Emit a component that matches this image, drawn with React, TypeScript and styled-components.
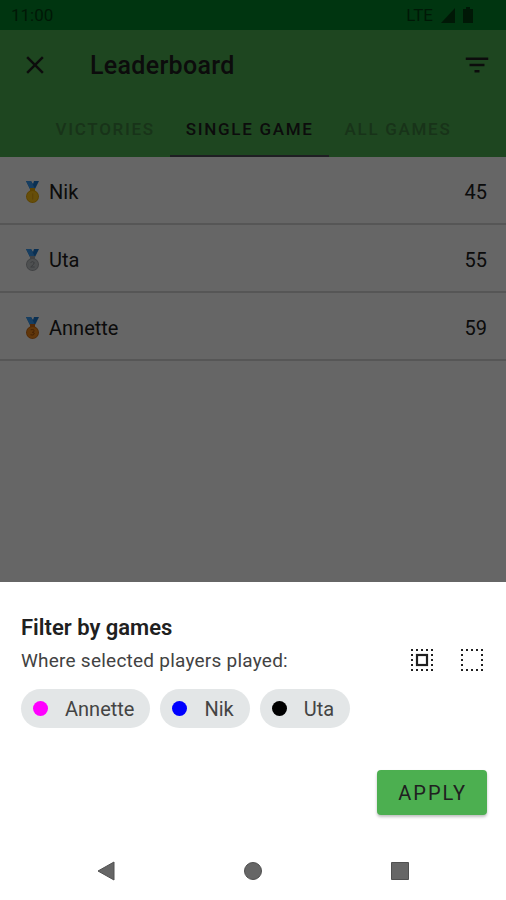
import React from "react";
import styled, { createGlobalStyle } from "styled-components";

const GlobalStyle = createGlobalStyle`
  *, *::before, *::after { box-sizing: border-box; }
  body {
    margin: 0;
    background: #fff;
    font-family: Roboto, "Liberation Sans", sans-serif;
    color: #202020;
  }
  button { font: inherit; color: inherit; border: 0; background: none; padding: 0; cursor: pointer; }
  svg { display: block; }
  h1, h2, p { margin: 0; }
`;

const Screen = styled.div`
  display: grid;
  grid-template: minmax(100vh, auto) / minmax(0, 1fr);
`;

const Page = styled.div`
  grid-area: 1 / 1;
  background: #fff;
`;

const Scrim = styled.div`
  grid-area: 1 / 1;
  z-index: 1;
  display: flex;
  flex-direction: column;
  justify-content: flex-end;
  background: rgba(0, 0, 0, 0.6);
`;

const StatusBar = styled.div`
  display: flex;
  align-items: center;
  height: 30px;
  padding: 0 33px 0 11px;
  background: #008428;
  color: #003e10;
  font-size: 17px;
`;

const StatusIcons = styled.div`
  display: flex;
  align-items: center;
  gap: 8px;
  margin-left: auto;
`;

const Header = styled.header`
  background: #4caf50;
`;

const Toolbar = styled.div`
  display: flex;
  align-items: center;
  height: 70px;
  padding: 0 14px 0 20px;
`;

const IconButton = styled.button`
  display: grid;
  place-items: center;
  width: 30px;
  height: 30px;
`;

const Title = styled.h1`
  flex: 1;
  margin-left: 40px;
  padding-top: 2px;
  font-size: 25px;
  line-height: 32px;
  font-weight: 500;
  letter-spacing: 0.0125em;
`;

const Tabs = styled.div`
  display: flex;
  justify-content: center;
`;

const Tab = styled.button<{ $active?: boolean }>`
  height: 57px;
  padding: 3px 15px 0 16px;
  border-bottom: 2px solid ${(p) => (p.$active ? "#4d4d56" : "transparent")};
  color: ${(p) => (p.$active ? "#202020" : "#3c7f3f")};
  font-size: 17px;
  font-weight: 500;
  letter-spacing: 0.1em;
  white-space: nowrap;
`;

const Ranking = styled.ol`
  list-style: none;
  margin: 0;
  padding: 0;
`;

const Row = styled.li`
  display: flex;
  align-items: center;
  height: 68px;
  padding: 3px 19px 0 24px;
  border-bottom: 2px solid #d6d6d6;
  font-size: 20px;
`;

const PlayerName = styled.span`
  flex: 1;
  margin-left: 9px;
`;

const Sheet = styled.section`
  background: #fff;
`;

const SheetBody = styled.div`
  padding: 32px 19px 0 21px;
`;

const SheetTitle = styled.h2`
  font-size: 22px;
  line-height: 28px;
  font-weight: 600;
`;

const FilterLine = styled.div`
  display: flex;
  align-items: center;
  justify-content: space-between;
  height: 38px;
`;

const FilterText = styled.p`
  font-size: 19px;
  line-height: 28px;
  letter-spacing: 0.0125em;
  color: #424242;
`;

const FilterActions = styled.div`
  display: flex;
  gap: 20px;
`;

const Chips = styled.div`
  display: flex;
  flex-wrap: wrap;
  gap: 10px;
  padding-top: 9px;
`;

const Chip = styled.button`
  display: flex;
  align-items: center;
  gap: 17px;
  height: 39px;
  padding: 0 16px 0 12px;
  border-radius: 20px;
  background: #e3e6e7;
  color: #444;
  font-size: 20px;
`;

const Dot = styled.span<{ $color: string }>`
  width: 15px;
  height: 15px;
  border-radius: 50%;
  background: ${(p) => p.$color};
`;

const Actions = styled.div`
  display: flex;
  justify-content: flex-end;
  padding-top: 42px;
`;

const ApplyButton = styled.button`
  height: 45px;
  padding: 0 20px 0 21px;
  border-radius: 4px;
  background: #4caf50;
  box-shadow: 0 2px 3px rgba(0, 0, 0, 0.25);
  color: #202020;
  font-size: 20px;
  letter-spacing: 0.1em;
`;

const SystemNav = styled.nav`
  display: grid;
  grid-template-columns: repeat(3, 1fr);
  height: 58px;
  margin-top: 27px;
  padding: 0 33px;
`;

const NavButton = styled.button`
  display: grid;
  place-items: center;
`;

const medals = {
  gold: { face: "#ffc21a", edge: "#e8a800", mark: "#e8a812" },
  silver: { face: "#c4c8cb", edge: "#a2a6aa", mark: "#92979b" },
  bronze: { face: "#f28b1c", edge: "#d06a10", mark: "#a9520c" },
};

function Medal({ kind }: { kind: keyof typeof medals }) {
  const m = medals[kind];
  return (
    <svg width="16" height="24" viewBox="0 0 16 24" role="img" aria-label={`${kind} medal`}>
      <path d="M2 1h5l2 3 1-3h5l-4 8H6z" fill="#1b78d0" />
      <path d="M2 1h5l4 8H6z" fill="#3b9cf2" />
      <path d="M6 8h5v3H6z" fill={m.edge} />
      <circle cx="8.5" cy="16.5" r="6.5" fill={m.edge} />
      <circle cx="8.5" cy="16.5" r="5.5" fill={m.face} />
      {kind === "gold" && <path d="M8 13.5h1.3v6H8z" fill={m.mark} />}
      {kind === "silver" && (
        <path d="M6.5 14.6q2-2 3.8 0q.2 1.4-3.6 4.4h4" fill="none" stroke={m.mark} />
      )}
      {kind === "bronze" && (
        <path d="M6.7 13.8q3.8-.8 3.4 1.3q-.4 1-1.8 1.2q2.3.2 2 1.7q-.7 1.7-3.8.8" fill="none" stroke={m.mark} />
      )}
    </svg>
  );
}

function SelectIcon({ filled }: { filled?: boolean }) {
  const steps = [0, 5, 10, 15, 20];
  return (
    <svg width="30" height="30" viewBox="0 0 30 30" fill="#202020">
      {steps.flatMap((x) =>
        steps
          .filter((y) => x === 0 || x === 20 || y === 0 || y === 20)
          .map((y) => <rect key={`${x}-${y}`} x={x + 4} y={y + 3} width="2" height="2" />)
      )}
      {filled && <rect x="10" y="9" width="10" height="10" fill="none" stroke="#202020" strokeWidth="2.2" />}
    </svg>
  );
}

const ranking: { name: string; score: number; medal: keyof typeof medals }[] = [
  { name: "Nik", score: 45, medal: "gold" },
  { name: "Uta", score: 55, medal: "silver" },
  { name: "Annette", score: 59, medal: "bronze" },
];

const players = [
  { name: "Annette", color: "#ff00ff" },
  { name: "Nik", color: "#0000ff" },
  { name: "Uta", color: "#000000" },
];

export default function App() {
  return (
    <>
      <GlobalStyle />
      <Screen>
        <Page>
          <StatusBar>
            <span>11:00</span>
            <StatusIcons>
              <span>LTE</span>
              <svg width="14" height="15" viewBox="0 0 14 15" fill="currentColor">
                <path d="M14 0v15H0z" />
              </svg>
              <svg width="10" height="16" viewBox="0 0 10 16" fill="currentColor">
                <path d="M3 0h4v2h3v14H0V2h3z" />
              </svg>
            </StatusIcons>
          </StatusBar>
          <Header>
            <Toolbar>
              <IconButton aria-label="Close">
                <svg width="30" height="30" viewBox="0 0 24 24" fill="currentColor">
                  <path d="M19 6.41 17.59 5 12 10.59 6.41 5 5 6.41 10.59 12 5 17.59 6.41 19 12 13.41 17.59 19 19 17.59 13.41 12z" />
                </svg>
              </IconButton>
              <Title>Leaderboard</Title>
              <IconButton aria-label="Filter">
                <svg width="30" height="30" viewBox="0 0 24 24" fill="currentColor">
                  <path d="M10 18h4v-2h-4v2zM3 6v2h18V6H3zm3 7h12v-2H6v2z" />
                </svg>
              </IconButton>
            </Toolbar>
            <Tabs role="tablist">
              <Tab role="tab" aria-selected={false}>VICTORIES</Tab>
              <Tab role="tab" aria-selected $active>SINGLE GAME</Tab>
              <Tab role="tab" aria-selected={false}>ALL GAMES</Tab>
            </Tabs>
          </Header>
          <Ranking>
            {ranking.map((r) => (
              <Row key={r.name}>
                <Medal kind={r.medal} />
                <PlayerName>{r.name}</PlayerName>
                <span>{r.score}</span>
              </Row>
            ))}
          </Ranking>
        </Page>
        <Scrim>
          <Sheet role="dialog" aria-labelledby="filter-title">
            <SheetBody>
              <SheetTitle id="filter-title">Filter by games</SheetTitle>
              <FilterLine>
                <FilterText>Where selected players played:</FilterText>
                <FilterActions>
                  <IconButton aria-label="Select all"><SelectIcon filled /></IconButton>
                  <IconButton aria-label="Select none"><SelectIcon /></IconButton>
                </FilterActions>
              </FilterLine>
              <Chips>
                {players.map((p) => (
                  <Chip key={p.name}>
                    <Dot $color={p.color} />
                    {p.name}
                  </Chip>
                ))}
              </Chips>
              <Actions>
                <ApplyButton>APPLY</ApplyButton>
              </Actions>
            </SheetBody>
            <SystemNav aria-label="System">
              <NavButton aria-label="Back">
                <svg width="18" height="20" viewBox="0 0 18 20">
                  <path d="M17 1v18L1 10z" fill="#666" stroke="#505050" />
                </svg>
              </NavButton>
              <NavButton aria-label="Home">
                <svg width="18" height="18" viewBox="0 0 18 18">
                  <circle cx="9" cy="9" r="8.5" fill="#666" stroke="#505050" />
                </svg>
              </NavButton>
              <NavButton aria-label="Recent apps">
                <svg width="18" height="18" viewBox="0 0 18 18">
                  <path d="M.5.5h17v17H.5z" fill="#666" stroke="#505050" />
                </svg>
              </NavButton>
            </SystemNav>
          </Sheet>
        </Scrim>
      </Screen>
    </>
  );
}
